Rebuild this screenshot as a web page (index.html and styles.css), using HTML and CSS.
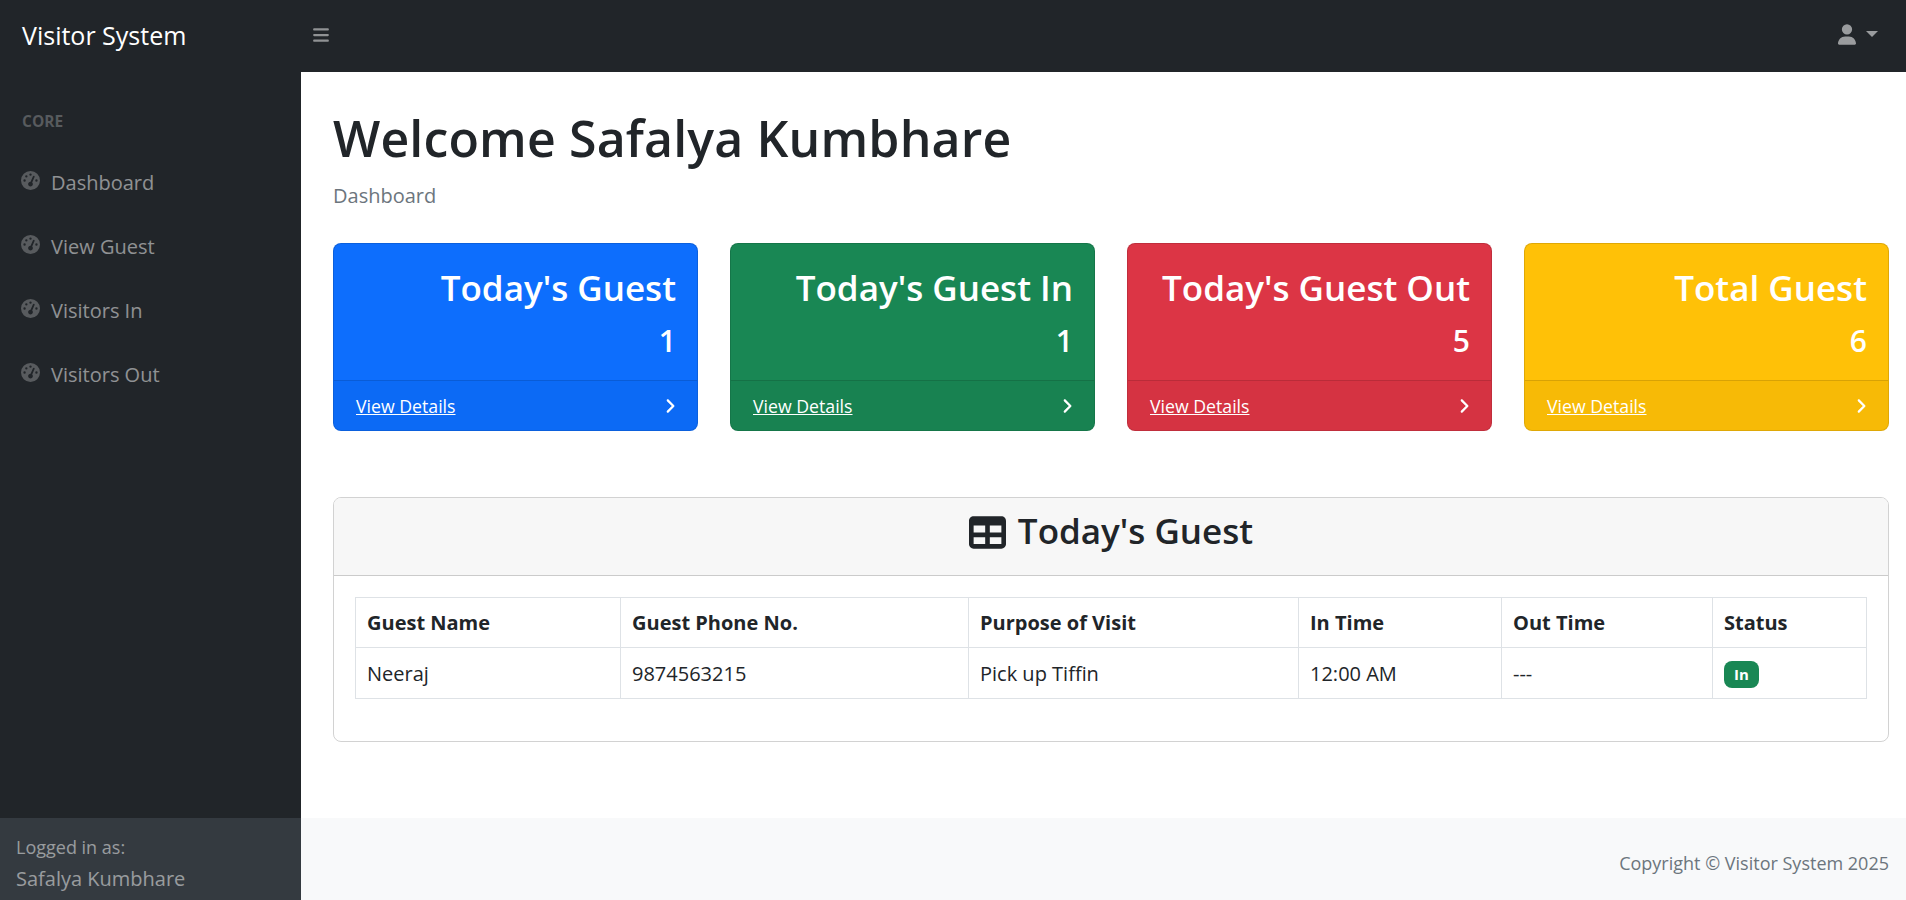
FILE: index.html
```html
<!DOCTYPE html>
<html lang="en">

<head>
  <meta charset="utf-8">
  <title>Visitor System</title>
  <link rel="stylesheet" href="styles.css">
</head>

<body>
  <nav class="topnav">
    <a class="brand" href="#">Visitor System</a>
    <svg class="bars" viewBox="0 0 448 512"><path d="M0 96C0 78.3 14.3 64 32 64H416c17.7 0 32 14.3 32 32s-14.3 32-32 32H32C14.3 128 0 113.7 0 96zM0 256c0-17.7 14.3-32 32-32H416c17.7 0 32 14.3 32 32s-14.3 32-32 32H32c-17.7 0-32-14.3-32-32zM448 416c0 17.7-14.3 32-32 32H32c-17.7 0-32-14.3-32-32s14.3-32 32-32H416c17.7 0 32 14.3 32 32z"/></svg>
    <div class="user-menu">
      <svg class="user" viewBox="0 0 448 512"><path d="M224 256A128 128 0 1 0 224 0a128 128 0 1 0 0 256zm-45.7 48C79.8 304 0 383.8 0 482.3C0 498.7 13.3 512 29.7 512H418.3c16.4 0 29.7-13.3 29.7-29.7C448 383.8 368.2 304 269.7 304H178.3z"/></svg>
      <span class="caret"></span>
    </div>
  </nav>

  <div class="layout">
    <aside class="sidebar">
      <div class="menu">
        <div class="menu-heading">CORE</div>
        <a class="menu-link" href="#"><svg class="gauge" viewBox="0 0 512 512"><use href="#gauge-high"/></svg>Dashboard</a>
        <a class="menu-link" href="#"><svg class="gauge" viewBox="0 0 512 512"><use href="#gauge-high"/></svg>View Guest</a>
        <a class="menu-link" href="#"><svg class="gauge" viewBox="0 0 512 512"><use href="#gauge-high"/></svg>Visitors In</a>
        <a class="menu-link" href="#"><svg class="gauge" viewBox="0 0 512 512"><use href="#gauge-high"/></svg>Visitors Out</a>
      </div>
      <div class="sidebar-footer">
        <div class="small">Logged in as:</div>
        <div>Safalya Kumbhare</div>
      </div>
    </aside>

    <div class="content">
      <main class="main">
        <h1>Welcome Safalya Kumbhare</h1>
        <div class="breadcrumb">Dashboard</div>

        <div class="stats">
          <div class="stat blue">
            <div class="stat-body">
              <h3>Today's Guest</h3>
              <h4>1</h4>
            </div>
            <div class="stat-footer"><a href="#">View Details</a><svg class="angle" viewBox="0 0 320 512"><use href="#angle-right"/></svg></div>
          </div>
          <div class="stat green">
            <div class="stat-body">
              <h3>Today's Guest In</h3>
              <h4>1</h4>
            </div>
            <div class="stat-footer"><a href="#">View Details</a><svg class="angle" viewBox="0 0 320 512"><use href="#angle-right"/></svg></div>
          </div>
          <div class="stat red">
            <div class="stat-body">
              <h3>Today's Guest Out</h3>
              <h4>5</h4>
            </div>
            <div class="stat-footer"><a href="#">View Details</a><svg class="angle" viewBox="0 0 320 512"><use href="#angle-right"/></svg></div>
          </div>
          <div class="stat yellow">
            <div class="stat-body">
              <h3>Total Guest</h3>
              <h4>6</h4>
            </div>
            <div class="stat-footer"><a href="#">View Details</a><svg class="angle" viewBox="0 0 320 512"><use href="#angle-right"/></svg></div>
          </div>
        </div>

        <div class="card">
          <div class="card-header">
            <svg class="table-icon" viewBox="0 0 512 512"><path d="M64 256V160H224v96H64zm0 64H224v96H64V320zm224 96V320H448v96H288zM448 256H288V160H448v96zM64 32C28.7 32 0 60.7 0 96V416c0 35.3 28.7 64 64 64H448c35.3 0 64-28.7 64-64V96c0-35.3-28.7-64-64-64H64z"/></svg>
            <span>Today's Guest</span>
          </div>
          <div class="card-body">
            <table>
              <thead>
                <tr>
                  <th>Guest Name</th>
                  <th>Guest Phone No.</th>
                  <th>Purpose of Visit</th>
                  <th>In Time</th>
                  <th>Out Time</th>
                  <th>Status</th>
                </tr>
              </thead>
              <tbody>
                <tr>
                  <td>Neeraj</td>
                  <td>9874563215</td>
                  <td>Pick up Tiffin</td>
                  <td>12:00 AM</td>
                  <td>---</td>
                  <td><span class="badge">In</span></td>
                </tr>
              </tbody>
            </table>
          </div>
        </div>
      </main>

      <footer class="footer">Copyright © Visitor System 2025</footer>
    </div>
  </div>

  <svg class="defs">
    <symbol id="gauge-high" viewBox="0 0 512 512"><path d="M0 256a256 256 0 1 1 512 0A256 256 0 1 1 0 256zM288 96a32 32 0 1 0 -64 0 32 32 0 1 0 64 0zM256 416c35.3 0 64-28.7 64-64c0-17.4-6.9-33.1-18.1-44.6L366 161.7c5.3-12.1-.2-26.3-12.3-31.6s-26.3 .2-31.6 12.3L257.9 288c-.6 0-1.3 0-1.9 0c-35.3 0-64 28.7-64 64s28.7 64 64 64zM176 144a32 32 0 1 0 -64 0 32 32 0 1 0 64 0zM96 288a32 32 0 1 0 0-64 32 32 0 1 0 0 64zm352-32a32 32 0 1 0 -64 0 32 32 0 1 0 64 0z"/></symbol>
    <symbol id="angle-right" viewBox="0 0 320 512"><path d="M278.6 233.4c12.5 12.5 12.5 32.8 0 45.3l-160 160c-12.5 12.5-32.8 12.5-45.3 0s-12.5-32.8 0-45.3L210.7 256 73.4 118.6c-12.5-12.5-12.5-32.8 0-45.3s32.8-12.5 45.3 0l160 160z"/></symbol>
  </svg>
</body>

</html>
```

FILE: styles.css
```css
* {
  box-sizing: border-box;
}

body {
  margin: 0;
  height: 100vh;
  overflow: hidden;
  display: flex;
  flex-direction: column;
  font-family: "Open Sans", "Noto Sans", sans-serif;
  font-size: 20px;
  color: #212529;
  background-color: #fff;
}

.defs {
  display: none;
}

.topnav {
  height: 72px;
  flex: none;
  display: flex;
  align-items: center;
  padding-bottom: 2px;
  background-color: #212529;
}

.brand {
  width: 301px;
  padding-left: 22px;
  font-size: 25px;
  color: #fff;
  text-decoration: none;
}

.bars {
  width: 16px;
  height: 18px;
  margin-left: 12px;
  fill: rgba(255, 255, 255, .5);
}

.user-menu {
  margin-left: auto;
  margin-right: 28px;
  margin-bottom: 2px;
  display: flex;
  align-items: center;
  gap: 10px;
}

.user {
  width: 18px;
  height: 21px;
  fill: rgba(255, 255, 255, .55);
}

.caret {
  border-top: 6px solid rgba(255, 255, 255, .55);
  border-left: 6px solid transparent;
  border-right: 6px solid transparent;
}

.layout {
  flex: 1;
  display: flex;
  min-height: 0;
}

.sidebar {
  width: 301px;
  flex: none;
  display: flex;
  flex-direction: column;
  background-color: #212529;
}

.menu {
  flex: 1;
}

.menu-heading {
  padding: 35px 22px 0;
  font-size: 15.5px;
  line-height: 28px;
  font-weight: 700;
  color: rgba(255, 255, 255, .25);
}

.menu-link {
  height: 64px;
  display: flex;
  align-items: center;
  padding-left: 21px;
  color: rgba(255, 255, 255, .5);
  text-decoration: none;
}

.menu-heading + .menu-link {
  margin-top: 15px;
}

.gauge {
  width: 19px;
  height: 19px;
  margin-right: 11px;
  margin-bottom: 4px;
  fill: rgba(255, 255, 255, .25);
}

.sidebar-footer {
  height: 82px;
  padding: 14px 16px 0;
  background-color: #343a40;
  color: rgba(255, 255, 255, .5);
  line-height: 31px;
}

.small {
  font-size: 18px;
  line-height: 31px;
}

.content {
  flex: 1;
  min-width: 0;
  display: flex;
  flex-direction: column;
}

.main {
  flex: 1;
  padding: 36px 17px 0 32px;
}

h1 {
  margin: 0;
  font-size: 50px;
  line-height: 60px;
  font-weight: 600;
  letter-spacing: 0.15px;
}

.breadcrumb {
  margin-top: 13px;
  color: #6c757d;
  line-height: 30px;
}

.stats {
  margin-top: 32px;
  display: grid;
  grid-template-columns: repeat(4, 365px);
  column-gap: 32px;
}

.stat {
  height: 188px;
  display: flex;
  flex-direction: column;
  border: 1px solid rgba(0, 0, 0, .125);
  border-radius: 8px;
  color: #fff;
  overflow: hidden;
}

.blue {
  background-color: #0d6efd;
}

.green {
  background-color: #198754;
}

.red {
  background-color: #dc3545;
}

.yellow {
  background-color: #ffc107;
}

.stat-body {
  flex: 1;
  padding: 23px 21px 0;
  text-align: right;
}

.stat-body h3 {
  margin: 0;
  font-size: 35px;
  line-height: 42px;
  font-weight: 600;
}

.stat-body h4 {
  margin: 14px 0 0;
  font-size: 30px;
  line-height: 36px;
  font-weight: 600;
}

.stat-footer {
  height: 50px;
  display: flex;
  align-items: center;
  justify-content: space-between;
  padding: 0 21px 0 22px;
  font-size: 17.7px;
  background-color: rgba(0, 0, 0, .03);
  border-top: 1px solid rgba(0, 0, 0, .125);
}

.stat-footer a {
  color: #fff;
}

.angle {
  width: 12px;
  height: 18px;
  fill: #fff;
}

.card {
  margin-top: 66px;
  height: 245px;
  border: 1px solid rgba(0, 0, 0, .175);
  border-radius: 8px;
  overflow: hidden;
}

.card-header {
  height: 78px;
  display: flex;
  align-items: center;
  justify-content: center;
  gap: 12px;
  padding-bottom: 12px;
  font-size: 35px;
  font-weight: 600;
  background-color: #f7f7f7;
  border-bottom: 1px solid rgba(0, 0, 0, .175);
}

.table-icon {
  width: 37px;
  height: 37px;
  margin-top: 3px;
  fill: #212529;
}

.card-body {
  padding: 21px;
}

table {
  width: 1512px;
  table-layout: fixed;
  border-collapse: collapse;
}

th,
td {
  height: 51px;
  padding: 0 11px;
  border: 1px solid #dee2e6;
  text-align: left;
  white-space: nowrap;
}

th {
  height: 50px;
}

th:nth-child(1) {
  width: 265px;
}

th:nth-child(2) {
  width: 348px;
}

th:nth-child(3) {
  width: 330px;
}

th:nth-child(4) {
  width: 203px;
}

th:nth-child(5) {
  width: 211px;
}

.badge {
  display: inline-block;
  padding: 5px 10px;
  border-radius: 8px;
  background-color: #198754;
  color: #fff;
  font-size: 15px;
  line-height: 17px;
  font-weight: 700;
  vertical-align: middle;
}

.footer {
  height: 82px;
  flex: none;
  display: flex;
  align-items: center;
  justify-content: flex-end;
  padding: 8px 17px 0 0;
  background-color: #f8f9fa;
  color: #6c757d;
  font-size: 18px;
}
```
